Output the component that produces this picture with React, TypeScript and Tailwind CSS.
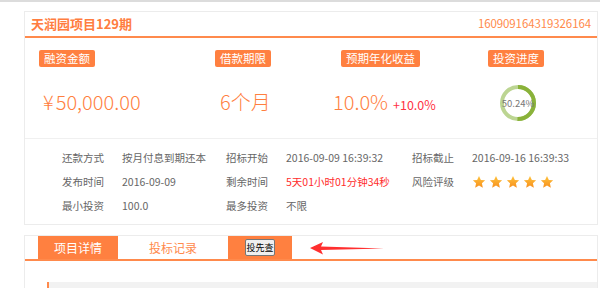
const STATS = [
  { label: '融资金额', w: 'w-[176px]' },
  { label: '借款期限', w: 'w-[126px]' },
  { label: '预期年化收益', w: 'w-[147px]' },
  { label: '投资进度', w: 'w-[80px]' },
]

function Badge({ text }: { text: string }) {
  return (
    <span className="inline-block h-[17px] px-[5px] leading-[17px] rounded-[2px] bg-[#ff8040] text-white text-[11.5px]">
      {text}
    </span>
  )
}

function Ring() {
  // 50.24% dark arc clockwise from top
  const r = 16
  const c = 2 * Math.PI * r
  return (
    <div className="relative w-[36px] h-[36px]">
      <svg width="36" height="36" viewBox="0 0 36 36">
        <circle cx="18" cy="18" r={r} fill="none" stroke="#bcd592" strokeWidth="4" />
        <circle
          cx="18" cy="18" r={r} fill="none" stroke="#8ab23a" strokeWidth="4"
          strokeDasharray={`${c * 0.5024} ${c}`}
          transform="rotate(-90 18 18)"
        />
      </svg>
      <span className="absolute inset-0 flex items-center justify-center text-[9.5px] text-[#777]">50.24%</span>
    </div>
  )
}

function Star() {
  return (
    <svg width="14" height="14" viewBox="0 0 24 24">
      <defs>
        <linearGradient id="sg" x1="0" y1="0" x2="0" y2="1">
          <stop offset="0" stopColor="#ffc43d" />
          <stop offset="1" stopColor="#f7901e" />
        </linearGradient>
      </defs>
      <path d="M12 1.5l3.2 7 7.3.7-5.5 5 1.6 7.5L12 17.9l-6.6 3.8 1.6-7.5-5.5-5 7.3-.7z" fill="url(#sg)" />
    </svg>
  )
}

function Row({ cells }: { cells: React.ReactNode[] }) {
  return (
    <div className="flex items-center h-[24px] text-[10.5px] text-[#666]">
      <span className="w-[60px]">{cells[0]}</span>
      <span className="w-[104px]">{cells[1]}</span>
      <span className="w-[60px]">{cells[2]}</span>
      <span className="w-[126px]">{cells[3]}</span>
      <span className="w-[60px]">{cells[4]}</span>
      <span>{cells[5]}</span>
    </div>
  )
}

function StatValue({ i }: { i: number }) {
  if (i === 0)
    return (
      <div className="mt-[23px] pl-[4px] text-[20px] font-light leading-[24px] text-[#ff7f3f] whitespace-nowrap">
        ¥<span className="ml-[2px]">50,000.00</span>
      </div>
    )
  if (i === 1) return <div className="mt-[23px] pl-[5px] text-[20px] font-light leading-[24px] text-[#ff7f3f]">6个月</div>
  if (i === 2)
    return (
      <div className="mt-[23px] -ml-[8px] flex items-baseline leading-[24px] whitespace-nowrap">
        <span className="text-[20px] font-light text-[#ff7f3f]">10.0%</span>
        <span className="ml-[5px] text-[12.5px] text-[#ff3344]">+10.0%</span>
      </div>
    )
  return (
    <div className="mt-[18px] ml-[12px]">
      <Ring />
    </div>
  )
}

export default function App() {
  return (
    <div
      className="relative w-[600px] h-[288px] overflow-hidden bg-white border-t-2 border-[#dcdcdc]"
      style={{ fontFamily: '"Noto Sans CJK SC", "Noto Sans", sans-serif' }}
    >
      {/* Project card */}
      <div className="ml-[24px] mt-[9px] w-[574px] border border-[#ececec]">
        <div className="flex items-center justify-between h-[26px] px-[6px] border-b-2 border-[#ff8a4c]">
          <span className="text-[13px] font-bold text-[#ff7d3f]">天润园项目129期</span>
          <span className="text-[11.5px] text-[#ff8a4c] tracking-[-0.1px]">160909164319326164</span>
        </div>

        <div className="flex pl-[14px] pt-[12px] h-[100px]">
          {STATS.map((s, i) => (
            <div key={s.label} className={`${s.w} flex flex-col items-start`}>
              <Badge text={s.label} />
              <StatValue i={i} />
            </div>
          ))}
        </div>

        <div className="border-t border-[#f0f0f0] pt-[7px] pb-[6px] pl-[37px]">
          <Row cells={['还款方式', '按月付息到期还本', '招标开始', '2016-09-09 16:39:32', '招标截止', '2016-09-16 16:39:33']} />
          <Row
            cells={[
              '发布时间', '2016-09-09', '剩余时间',
              <span className="text-[#ff2b2b]">5天01小时01分钟34秒</span>,
              '风险评级',
              <span className="flex gap-[3px]">
                <Star /><Star /><Star /><Star /><Star />
              </span>,
            ]}
          />
          <Row cells={['最小投资', '100.0', '最多投资', '不限', '', '']} />
        </div>
      </div>

      {/* Tabs card */}
      <div className="ml-[24px] mt-[10px] w-[574px] border-t border-l border-r border-[#ececec]">
        <div className="flex h-[25px] pl-[13px] border-b-2 border-[#ff8a4c]">
          <div className="w-[80px] flex items-center justify-center bg-[#ff8040] text-white text-[12px]">项目详情</div>
          <div className="w-[110px] flex items-center justify-center text-[#ff8a4c] text-[12px]">投标记录</div>
          <div className="w-[64px] flex items-center justify-center bg-[#ff8040]">
            <button className="w-[30px] h-[17px] p-0 text-[9px] leading-[15px] text-black bg-[#efefef] border border-[#767676] rounded-[2px] whitespace-nowrap">
              投先查
            </button>
          </div>
        </div>
        <div className="h-[21px]" />
        <div className="ml-[22px] h-[10px] flex">
          <div className="w-[2px] bg-[#ff8a4c]" />
          <div className="flex-1 bg-[#f2f2f2]" />
        </div>
      </div>

      {/* annotation arrow */}
      <svg className="absolute left-[310px] top-[239px]" width="75" height="15" viewBox="0 0 75 15">
        <polygon points="0,7 13,1 11,5.5 74,7.5 11,9 13,13.5" fill="#ff2f2f" />
      </svg>
    </div>
  )
}
